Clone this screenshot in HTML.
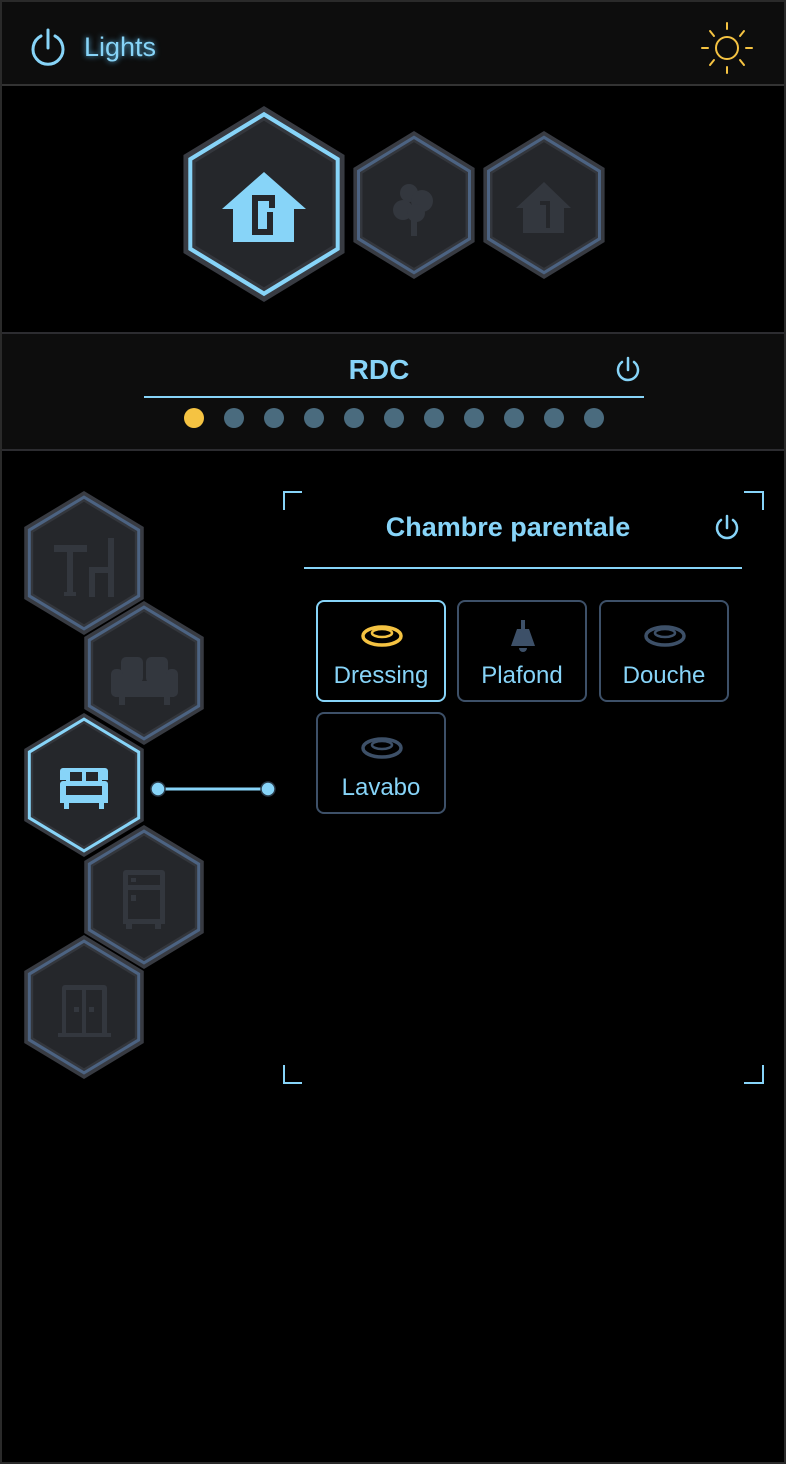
<!DOCTYPE html>
<html><head><meta charset="utf-8"><style>
html,body{margin:0;padding:0;background:#000;}
body{width:786px;height:1464px;position:relative;overflow:hidden;font-family:"Liberation Sans",sans-serif;}
.frame{position:absolute;left:0;top:0;width:782px;height:1460px;border:2px solid #2a2a2a;}
.hdr{position:absolute;left:2px;top:2px;width:782px;height:82px;background:#0d0d0d;border-bottom:2px solid #333;}
.band{position:absolute;left:2px;top:332px;width:782px;height:115px;background:#0d0d0d;border-top:2px solid #2c2c30;border-bottom:2px solid #2c2c30;}
.t{position:absolute;color:#87d4f8;white-space:nowrap;}
.btn{position:absolute;width:130px;height:102px;border:2px solid #3d5068;border-radius:8px;box-sizing:border-box;}
.btn.on{border-color:#87d4f8;}
.btn span{position:absolute;left:0;right:0;top:60px;text-align:center;color:#87d4f8;font-size:24px;line-height:28px;}
.btn svg{position:absolute;left:43px;top:22px;}
</style></head><body>
<div class="frame"></div>
<div class="hdr"></div>
<div class="band"></div>
<div class="t" style="left:84px;top:32px;font-size:27px;text-shadow:0 0 6px #5cb8e8;">Lights</div>
<div class="t" style="left:0;width:758px;text-align:center;top:354px;font-size:28px;font-weight:bold;">RDC</div>
<div class="t" style="left:283px;width:450px;text-align:center;top:512px;font-size:27px;font-weight:bold;">Chambre parentale</div>

<svg width="786" height="1464" style="position:absolute;left:0;top:0">
<defs>
<g id="hA">
<polygon points="0,-100 86.6,-50 86.6,50 0,100 -86.6,50 -86.6,-50" fill="#383b42"/>
<polygon points="0,-94 81.4,-47 81.4,47 0,94 -81.4,47 -81.4,-47" fill="#87d4f8"/>
<polygon points="0,-89 77.1,-44.5 77.1,44.5 0,89 -77.1,44.5 -77.1,-44.5" fill="#34373d"/>
<polygon points="0,-85 73.6,-42.5 73.6,42.5 0,85 -73.6,42.5 -73.6,-42.5" fill="#25272b"/>
</g>
<g id="hI">
<polygon points="0,-100 86.6,-50 86.6,50 0,100 -86.6,50 -86.6,-50" fill="#383b42"/>
<polygon points="0,-94 81.4,-47 81.4,47 0,94 -81.4,47 -81.4,-47" fill="#4c6382"/>
<polygon points="0,-89 77.1,-44.5 77.1,44.5 0,89 -77.1,44.5 -77.1,-44.5" fill="#34373d"/>
<polygon points="0,-85 73.6,-42.5 73.6,42.5 0,85 -73.6,42.5 -73.6,-42.5" fill="#25272b"/>
</g>
</defs>
<g fill="none" stroke="#87d4f8" stroke-width="3" stroke-linecap="round">
<path d="M41 36 A15 15 0 1 0 55 36"/><path d="M48 30 V48"/>
</g>
<g fill="none" stroke="#f5c342" stroke-width="2" stroke-linecap="round">
<circle cx="727" cy="48" r="11"/>
<path d="M727 23v6M727 67v6M702 48h6M746 48h6M710 31l4 5M744 31l-4 5M710 65l4-5M744 65l-4-5"/>
</g>
<use href="#hA" transform="translate(264,204) scale(0.93,0.98)"/>
<use href="#hI" transform="translate(414,205) scale(0.70,0.74)"/>
<use href="#hI" transform="translate(544,205) scale(0.70,0.74)"/>
<path d="M264 172 L306 209 L294 209 L294 242 L233 242 L233 209 L222 209 Z" fill="#87d4f8"/>
<path d="M272 208 V198 H255 V232 H270 V212" fill="none" stroke="#25272b" stroke-width="6"/>
<g fill="#33373e">
<circle cx="409" cy="193" r="9"/><circle cx="422" cy="201" r="11"/><circle cx="403" cy="210" r="10"/><circle cx="416" cy="213" r="9"/>
<rect x="411" y="215" width="6" height="21"/>
<path d="M544 182 L571 208 L564 208 L564 233 L523 233 L523 208 L516 208 Z"/>
</g>
<path d="M540 203 H548 V228" fill="none" stroke="#25272b" stroke-width="4"/>
<g fill="none" stroke="#87d4f8" stroke-width="2.5" stroke-linecap="round">
<path d="M622 362 A10 10 0 1 0 634 362"/><path d="M628 358 V370"/>
<path d="M721 520 A10 10 0 1 0 733 520"/><path d="M727 516 V528"/>
</g>
<line x1="144" y1="397" x2="644" y2="397" stroke="#87d4f8" stroke-width="2"/>
<circle cx="194" cy="418" r="10" fill="#f5c342"/>
<g fill="#4a6b7e">
<circle cx="234" cy="418" r="10"/><circle cx="274" cy="418" r="10"/><circle cx="314" cy="418" r="10"/><circle cx="354" cy="418" r="10"/><circle cx="394" cy="418" r="10"/><circle cx="434" cy="418" r="10"/><circle cx="474" cy="418" r="10"/><circle cx="514" cy="418" r="10"/><circle cx="554" cy="418" r="10"/><circle cx="594" cy="418" r="10"/>
</g>
<use href="#hI" transform="translate(84,563) scale(0.69,0.72)"/>
<use href="#hI" transform="translate(144,673) scale(0.69,0.72)"/>
<use href="#hI" transform="translate(144,897) scale(0.69,0.72)"/>
<use href="#hI" transform="translate(84,1007) scale(0.69,0.72)"/>
<use href="#hA" transform="translate(84,785) scale(0.69,0.72)"/>
<g fill="#33373e">
<rect x="54" y="545" width="33" height="7"/><rect x="67" y="552" width="6" height="42"/><rect x="64" y="592" width="12" height="4"/>
<rect x="108" y="538" width="6" height="59"/><rect x="89" y="567" width="25" height="6"/><rect x="89" y="567" width="6" height="30"/>
<rect x="121" y="657" width="22" height="26" rx="5"/><rect x="146" y="657" width="22" height="26" rx="5"/>
<rect x="111" y="669" width="12" height="28" rx="5"/><rect x="166" y="669" width="12" height="28" rx="5"/>
<rect x="115" y="681" width="59" height="16"/><rect x="119" y="696" width="6" height="9"/><rect x="164" y="696" width="6" height="9"/>
<path fill-rule="evenodd" d="M126 870 h36 a3 3 0 0 1 3 3 v51 h-42 v-51 a3 3 0 0 1 3 -3z M128 875 v10 h32 v-10z M128 890 v29 h32 v-29z"/>
<rect x="126" y="924" width="6" height="5"/><rect x="155" y="924" width="6" height="5"/>
<rect x="131" y="878" width="5" height="4"/><rect x="131" y="895" width="5" height="6"/>
<path fill-rule="evenodd" d="M64 985 h40 a3 3 0 0 1 3 3 v45 h4 v4 h-53 v-4 h4 v-45 a3 3 0 0 1 3 -3z M66 990 v43 h16 v-43z M86 990 v43 h16 v-43z"/>
<rect x="74" y="1007" width="5" height="5"/><rect x="89" y="1007" width="5" height="5"/>
</g>
<g fill="#87d4f8">
<path fill-rule="evenodd" d="M63 768 h42 a3 3 0 0 1 3 3 v9 h-6 v-8 h-36 v8 h-6 v-9 a3 3 0 0 1 3 -3z"/>
<rect x="66" y="772" width="4" height="10"/><rect x="82" y="772" width="4" height="10"/><rect x="98" y="772" width="4" height="10"/>
<path fill-rule="evenodd" d="M63 781 h42 a3 3 0 0 1 3 3 v19 h-48 v-19 a3 3 0 0 1 3 -3z M66 786 v9 h36 v-9z"/>
<rect x="64" y="802" width="5" height="7"/><rect x="99" y="802" width="5" height="7"/>
</g>
<line x1="158" y1="789" x2="268" y2="789" stroke="#87d4f8" stroke-width="3"/>
<circle cx="158" cy="789" r="7" fill="#87d4f8" stroke="#2a3a48" stroke-width="1.5"/>
<circle cx="268" cy="789" r="7" fill="#87d4f8" stroke="#2a3a48" stroke-width="1.5"/>
<g fill="none" stroke="#87d4f8" stroke-width="2">
<path d="M284 510 V492 H302"/><path d="M744 492 H763 V510"/>
<path d="M284 1065 V1083 H302"/><path d="M744 1083 H763 V1065"/>
</g>
<line x1="304" y1="568" x2="742" y2="568" stroke="#87d4f8" stroke-width="2"/>
</svg>

<div class="btn on" style="left:316px;top:600px;"><svg width="42" height="24"><ellipse cx="21" cy="12" rx="19" ry="9" fill="none" stroke="#f5c342" stroke-width="3.5"/><ellipse cx="21" cy="9" rx="10" ry="4" fill="none" stroke="#f5c342" stroke-width="2.5"/></svg><span>Dressing</span></div>
<div class="btn" style="left:457px;top:600px;"><svg width="42" height="38" style="top:18px"><rect x="19" y="0" width="4" height="10" fill="#3d5068"/><path d="M15 9 H27 L33 26 H9 Z" fill="#3d5068"/><path d="M17 28 a4 4 0 0 0 8 0z" fill="#3d5068"/></svg><span>Plafond</span></div>
<div class="btn" style="left:599px;top:600px;"><svg width="42" height="24"><ellipse cx="21" cy="12" rx="19" ry="9" fill="none" stroke="#3d5068" stroke-width="3.5"/><ellipse cx="21" cy="9" rx="10" ry="4" fill="none" stroke="#3d5068" stroke-width="2.5"/></svg><span>Douche</span></div>
<div class="btn" style="left:316px;top:712px;"><svg width="42" height="24"><ellipse cx="21" cy="12" rx="19" ry="9" fill="none" stroke="#3d5068" stroke-width="3.5"/><ellipse cx="21" cy="9" rx="10" ry="4" fill="none" stroke="#3d5068" stroke-width="2.5"/></svg><span>Lavabo</span></div>
</body></html>
